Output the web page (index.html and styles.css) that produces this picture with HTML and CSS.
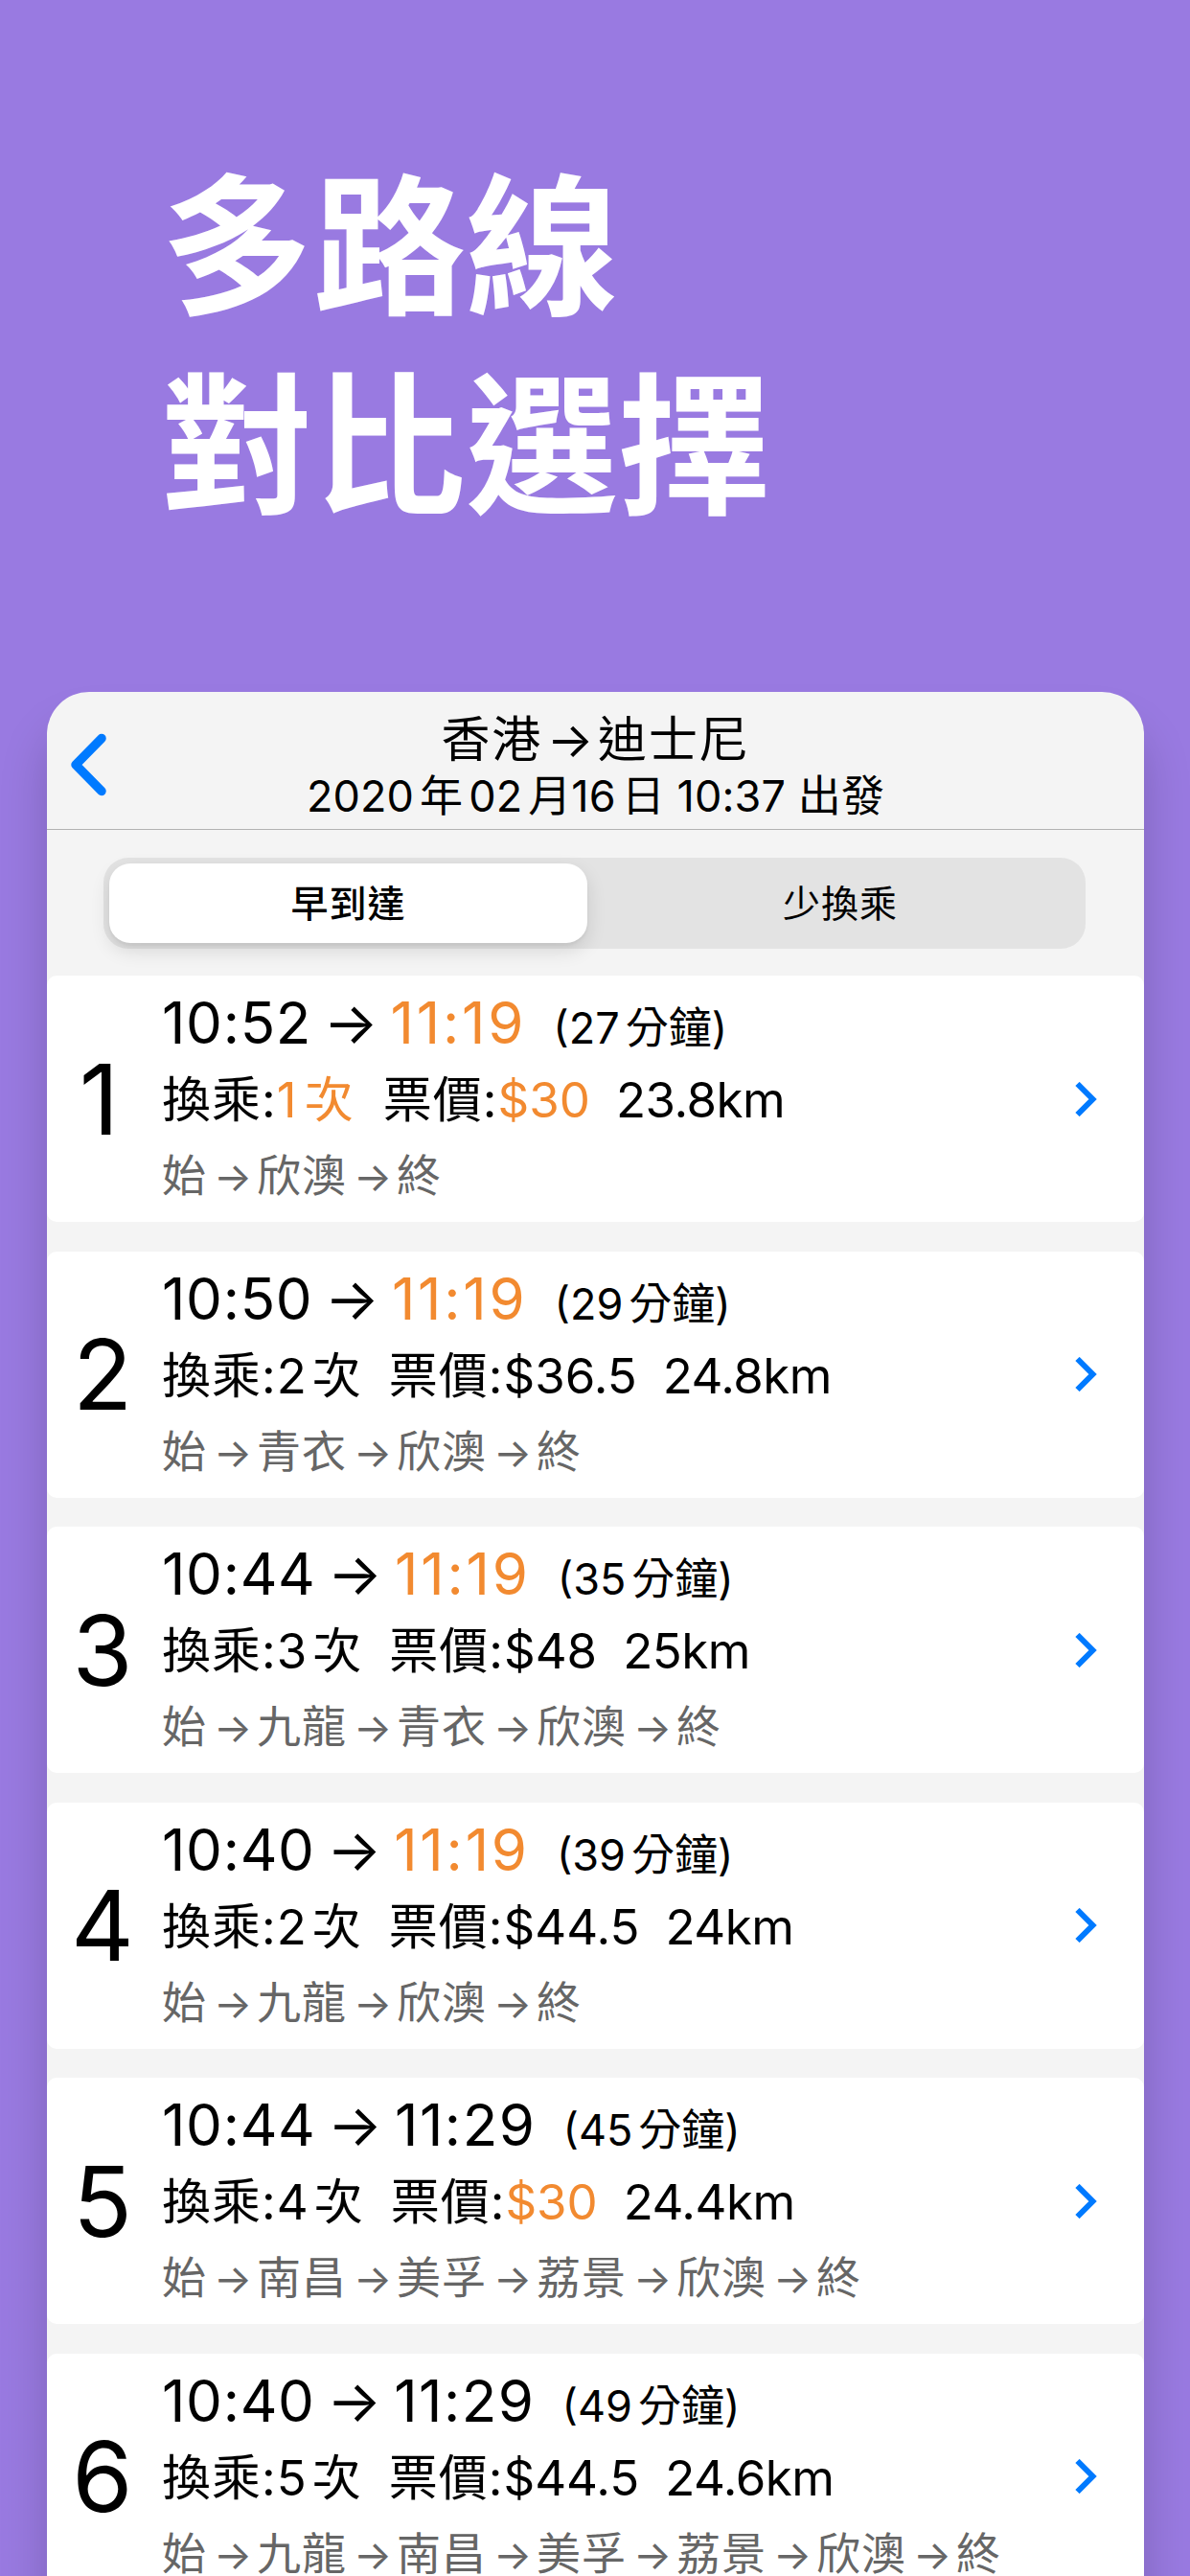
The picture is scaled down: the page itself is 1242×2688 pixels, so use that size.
FILE: index.html
```
<!DOCTYPE html>
<html lang="zh-Hant">
<head>
    <meta charset="UTF-8">
    <meta name="viewport" content="width=device-width, initial-scale=1.0">
    <title>多路線對比選擇</title>
    <link rel="stylesheet" href="styles.css">
</head>
<body>
    <h1 class="headline">多路線<br>對比選擇</h1>

    <main class="phone">
        <header class="nav-bar">
            <svg class="back-icon" viewBox="0 0 38 66"><path d="M33 5.5 6 33 33 60.5"/></svg>
            <div class="nav-title">香港<span class="arrow">→</span>迪士尼</div>
            <div class="nav-date">2020<i></i>年<i></i>02<i></i>月16<i></i>日 10:37 出發</div>
        </header>

        <div class="segment">
            <div class="segment-item active">早到達</div>
            <div class="segment-item">少換乘</div>
        </div>

        <div id="routes" class="route-list"></div>
    </main>

    <script>
        const routes = [
            { start: '10:52', end: '11:19', fastest: true, minutes: 27, transfers: 1, fewest: true, price: '$30', cheapest: true, distance: '23.8km', stops: ['始', '欣澳', '終'] },
            { start: '10:50', end: '11:19', fastest: true, minutes: 29, transfers: 2, price: '$36.5', distance: '24.8km', stops: ['始', '青衣', '欣澳', '終'] },
            { start: '10:44', end: '11:19', fastest: true, minutes: 35, transfers: 3, price: '$48', distance: '25km', stops: ['始', '九龍', '青衣', '欣澳', '終'] },
            { start: '10:40', end: '11:19', fastest: true, minutes: 39, transfers: 2, price: '$44.5', distance: '24km', stops: ['始', '九龍', '欣澳', '終'] },
            { start: '10:44', end: '11:29', minutes: 45, transfers: 4, price: '$30', cheapest: true, distance: '24.4km', stops: ['始', '南昌', '美孚', '荔景', '欣澳', '終'] },
            { start: '10:40', end: '11:29', minutes: 49, transfers: 5, price: '$44.5', distance: '24.6km', stops: ['始', '九龍', '南昌', '美孚', '荔景', '欣澳', '終'] }
        ];

        // Orange marks the best value in each category
        const mark = (text, best) => `<span class="${best ? 'best' : 'plain'}">${text}</span>`;

        document.getElementById('routes').innerHTML = routes.map((route, index) => `
            <div class="route">
                <div class="route-number">${index + 1}</div>
                <div class="route-info">
                    <div class="route-time">${route.start}<span class="arrow">→</span>${mark(route.end, route.fastest)}<span class="duration">(${route.minutes}<i></i>分鐘)</span></div>
                    <div class="route-detail"><span class="transfers"><span class="label">換乘:</span>${mark(`${route.transfers}<i></i>次`, route.fewest)}</span><span class="price"><span class="label">票價:</span>${mark(route.price, route.cheapest)}</span><span class="distance">${route.distance}</span></div>
                    <div class="route-stops">${route.stops.join('<span class="arrow">→</span>')}</div>
                </div>
                <svg class="route-icon" viewBox="0 0 24 36"><path d="M2.5 2 18.5 18 2.5 34"/></svg>
            </div>`).join('');
    </script>
</body>
</html>
```

FILE: styles.css
```
* {
    box-sizing: border-box;
}

body {
    margin: 0;
    height: 2688px;
    overflow: hidden;
    background-color: #997ae1;
    font-family: Inter, "Noto Sans CJK TC", sans-serif;
    color: #000;
}

.headline {
    margin: 0;
    padding: 154px 0 0 168px;
    height: 722px;
    font-size: 159px;
    line-height: 208px;
    font-weight: 700;
    color: #fff;
}

.phone {
    width: 1145px;
    height: 2060px;
    margin-left: 49px;
    background-color: #f4f4f4;
    border-radius: 44px 44px 0 0;
    box-shadow: 0 40px 50px rgba(0, 0, 0, 0.18);
}

/* Thin gap between digits and Chinese characters */
i {
    display: inline-block;
    width: 6px;
}

.arrow {
    display: inline-block;
    text-align: center;
}

/* Navigation bar */
.nav-bar {
    position: relative;
    height: 144px;
    padding-top: 20px;
    border-bottom: 1px solid #b2b2b2;
    text-align: center;
    white-space: nowrap;
}

.back-icon {
    position: absolute;
    left: 24px;
    top: 43px;
    width: 38px;
    height: 66px;
}

.back-icon path {
    fill: none;
    stroke: #007aff;
    stroke-width: 9.5;
    stroke-linecap: round;
    stroke-linejoin: round;
}

.nav-title {
    font-size: 51px;
    line-height: 60px;
    letter-spacing: 1.8px;
}

.nav-title .arrow {
    width: 58px;
    padding-left: 2px;
}

.nav-date {
    font-size: 45px;
    line-height: 58px;
    letter-spacing: 0.1px;
}

/* Sort switch */
.segment {
    display: flex;
    width: 1025px;
    height: 95px;
    margin: 29px 0 28px 59px;
    padding: 6px;
    background-color: #e3e3e3;
    border-radius: 26px;
}

.segment-item {
    flex: 1;
    padding-left: 14px;
    font-size: 39px;
    line-height: 84px;
    letter-spacing: 1px;
    text-align: center;
}

.segment-item.active {
    flex: none;
    width: 499px;
    padding-left: 0;
    background-color: #fff;
    border-radius: 22px;
    font-weight: 500;
    box-shadow: 0 8px 20px rgba(0, 0, 0, 0.12), 0 3px 3px rgba(0, 0, 0, 0.04);
}

/* Route cards */
.route-list {
    display: grid;
    gap: 30.6px;
}

.route {
    display: flex;
    align-items: center;
    height: 257px;
    background-color: #fff;
    border-radius: 10px;
    white-space: nowrap;
}

.route-number {
    width: 116px;
    font-size: 102px;
    text-align: center;
}

.route:first-child .route-number {
    padding-right: 7px;
}

.route-info {
    flex: 1;
    height: 257px;
    padding-top: 10px;
    padding-left: 4px;
}

.route-time {
    font-size: 60px;
    line-height: 78px;
    letter-spacing: 0.7px;
}

.route-time .arrow {
    width: 82.5px;
}

.route-time .best {
    letter-spacing: 2.8px;
}

.route-time .plain {
    letter-spacing: 1.5px;
}

.duration {
    margin-left: 28px;
    font-size: 45px;
    letter-spacing: 0;
}

.route-detail {
    font-size: 51px;
    line-height: 72px;
}

.label {
    letter-spacing: 1px;
}

.transfers .best {
    letter-spacing: 2.2px;
}

.price {
    margin-left: 29px;
}

.distance {
    margin-left: 27px;
    letter-spacing: -0.5px;
}

.route-stops {
    font-size: 46px;
    line-height: 84px;
    letter-spacing: 1px;
    color: #666;
}

.route-stops .arrow {
    width: 52px;
    padding-left: 3px;
    font-size: 42px;
}

.best {
    color: #f28a30;
}

.route-icon {
    width: 24px;
    height: 36px;
    margin-right: 48px;
}

.route-icon path {
    fill: none;
    stroke: #007aff;
    stroke-width: 6;
}
```
